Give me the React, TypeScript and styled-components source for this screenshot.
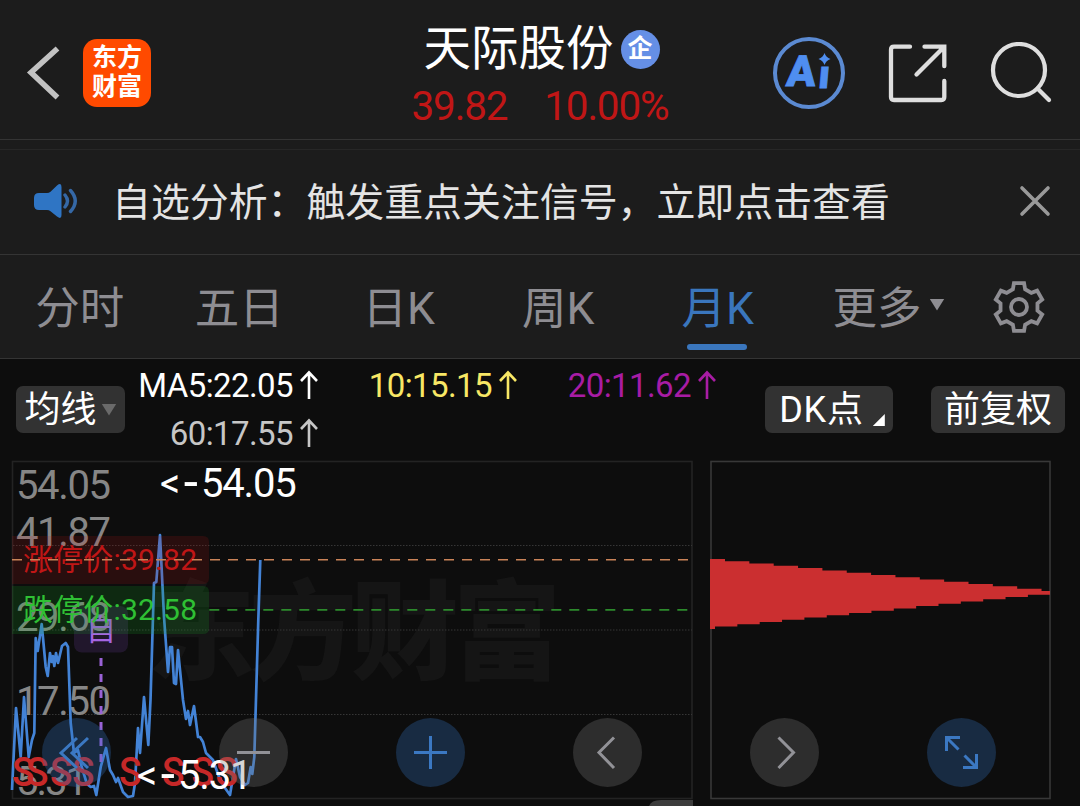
import React from 'react';
import styled, { createGlobalStyle, css } from 'styled-components';

const colors = {
    bar: '#1c1c1c',
    page: '#0d0d0d',
    line: '#343434',
    blue: '#3a76bd',
    muted: '#8e8d92',
    rise: '#c01616',
    fall: '#2fc034',
    price: '#4383d6',
};

const fontStack = "Roboto, 'Noto Sans', 'Noto Sans CJK SC', sans-serif";

const tabs = ['分时', '五日', '日K', '周K', '月K'];

const averages = [
    { label: 'MA5:22.05', color: '#ffffff' },
    { label: '10:15.15', color: '#f8e765' },
    { label: '20:11.62', color: '#a81ca4' },
    { label: '60:17.55', color: '#c6c6c6' },
];

const axisLabels = [
    { text: '54.05', y: 39, width: 95 },
    { text: '41.87', y: 86, width: 95 },
    { text: '29.68', y: 171, width: 95 },
    { text: '17.50', y: 255, width: 95 },
    { text: '5.31', y: 335, width: 72 },
];

const sellMarks = [23, 37, 61, 83, 130, 173, 202.5, 226.5];

const pricePoints = [
    [12, 330], [16, 248], [20.7, 297], [24, 237], [28.7, 297], [32, 280], [34.3, 273],
    [35.7, 178], [37.7, 191], [41.7, 164], [45.7, 207], [47.7, 216], [50, 193], [51.7, 202],
    [53, 196], [54.3, 206], [56, 193], [58, 203], [62, 186], [65.7, 183], [68, 187],
    [70.7, 263], [74, 293], [78, 290], [81.7, 307], [87, 324], [90.7, 327], [94, 326],
    [96.3, 335], [100.7, 307], [106, 288], [110, 310], [113, 315], [116, 322], [118, 318],
    [123, 332], [128, 337], [133, 336], [135, 323], [138, 268], [140, 293], [144, 237],
    [148.3, 285], [150.5, 240], [154, 123], [156.3, 122], [160, 75], [164, 157], [168, 212],
    [170, 187], [172, 187], [174, 223], [176, 224], [178, 190], [183, 240], [186, 259],
    [188, 251], [190, 265], [194, 246], [198, 277], [200, 277], [203, 282], [206, 293],
    [213, 300], [219, 317], [225, 328], [230, 335], [236, 299], [240, 317], [245, 325],
    [248, 323], [250.7, 307], [252.3, 314], [254.3, 297], [258.3, 160], [260.3, 100],
];

// Stepped outline of the chip distribution, upper edge then lower edge back
function buildChips() {
    const points: string[] = [];
    let y = 99;
    points.push(`0,${y}`);
    for (let i = 0; i < 14; i++) {
        const x = 15 + i * 24.35;
        points.push(`${x},${y}`);
        y += 2.28;
        points.push(`${x},${y}`);
    }
    points.push(`340,${y}`);
    y = 134.7;
    points.push(`340,${y}`);
    for (let i = 14; i >= 0; i--) {
        const x = 5 + i * 22.35;
        points.push(`${x},${y}`);
        y += 2.28;
        points.push(`${x},${y}`);
    }
    points.push(`0,${y}`);
    return points.join(' ');
}

function buildGear() {
    const at = (radius: number, deg: number) => {
        const rad = (deg * Math.PI) / 180;
        return `${27 + radius * Math.cos(rad)},${27 + radius * Math.sin(rad)}`;
    };
    const points: string[] = [];
    for (let a = -90; a < 270; a += 60) {
        points.push(at(24.4, a - 12), at(24.4, a + 12), at(18.8, a + 19), at(18.8, a + 41));
    }
    return points.join(' ');
}

function Peak({ x, y, value }: { x: number; y: number; value: string }) {
    return (
        <PeakText x={x} y={y}>
            {'<'}
            <Dash x={x + 22.5}>-</Dash>
            <tspan x={x + 41}>{value}</tspan>
        </PeakText>
    );
}

function PriceChart() {
    return (
        <svg width="694" height="346" viewBox="0 0 694 346">
            <Watermark x="147" y="211" textLength="414">东方财富</Watermark>
            <rect x="12.5" y="1.5" width="679.5" height="337" fill="none" stroke="#232323" strokeWidth="1.6" />
            {[85.5, 170, 254.5].map((y) => (
                <line key={y} x1="13" x2="692" y1={y} y2={y} stroke="#363636" strokeDasharray="1.5 1.5" />
            ))}
            {axisLabels.map((item) => (
                <AxisText key={item.text} x="16" y={item.y} textLength={item.width}>{item.text}</AxisText>
            ))}
            <polyline
                points={pricePoints.map((p) => p.join(',')).join(' ')}
                fill="none"
                stroke={colors.price}
                strokeWidth="2.7"
                strokeLinejoin="round"
            />
            <rect x="74" y="146" width="54" height="46.5" rx="8" fill="rgba(140, 80, 210, 0.16)" />
            <EventText x="86" y="180">自</EventText>
            <line x1="101" x2="101" y1="198" y2="302" stroke="#9a62d6" strokeWidth="3" strokeDasharray="8 8" />
            <path d="M12 76h191q6 0 6 6v36q0 6-6 6H12z" fill="rgba(200, 20, 20, 0.15)" />
            <path d="M12 126h191q6 0 6 6v36q0 6-6 6H12z" fill="rgba(20, 170, 40, 0.18)" />
            <LimitText x="23" y="110" fill={colors.rise} textLength="174">涨停价:39.82</LimitText>
            <LimitText x="23" y="160" fill={colors.fall} textLength="174">跌停价:32.58</LimitText>
            <line x1="12" x2="692" y1="99.8" y2="99.8" stroke="#c98358" strokeWidth="1.6" strokeDasharray="10 8" />
            <line x1="209.3" x2="692" y1="149.8" y2="149.8" stroke="#2c8a2c" strokeWidth="1.8" strokeDasharray="10 8" />
            {sellMarks.map((x) => (
                <SellText key={x} x={x - 11} y="326" textLength="22.5" lengthAdjust="spacingAndGlyphs">S</SellText>
            ))}
            <Peak x={160} y={37} value="54.05" />
            <Peak x={137} y={329} value="5.31" />
            <path d="M649 346q2-6 12-6h32v6z" fill="#3c3c3c" />
        </svg>
    );
}

function ChipChart() {
    return (
        <svg width="341" height="346" viewBox="0 0 341 346">
            <rect x="1" y="1.5" width="339" height="337" fill="none" stroke="#383838" strokeWidth="1.6" />
            <polygon points={buildChips()} fill="#cb2f30" />
        </svg>
    );
}

function App() {
    return (
        <Screen>
            <GlobalStyle />
            <Header>
                <HeaderLeft>
                    <svg width="40" height="60" viewBox="0 0 40 60">
                        <path d="M33.5 5.5L7 29.5l26.5 25" fill="none" stroke="#c2c2c2" strokeWidth="5.5" />
                    </svg>
                    <Logo>
                        <span>东方</span>
                        <span>财富</span>
                    </Logo>
                </HeaderLeft>
                <HeaderTitle>
                    <StockName>
                        天际股份
                        <Badge>企</Badge>
                    </StockName>
                    <Quote>
                        <span>39.82</span>
                        <span>10.00%</span>
                    </Quote>
                </HeaderTitle>
                <HeaderRight>
                    <svg width="74" height="74" viewBox="0 0 74 74">
                        <circle cx="37" cy="37" r="34" fill="none" stroke="#5b8ad2" strokeWidth="4" />
                        <AiText x="14" y="50" fontSize="43" transform="translate(4 0) skewX(-5)">A</AiText>
                        <AiText x="46" y="52" fontSize="40" transform="translate(4 0) skewX(-5)">ı</AiText>
                        <path d="M52.5 17q1.5 4.500 6 6-4.500 1.500-6 6-1.500-4.500-6-6 4.500-1.500 6-6z" fill="#4f8ef0" />
                    </svg>
                    <svg width="60" height="60" viewBox="0 0 60 60" fill="none" stroke="#dedede" strokeWidth="4.3" strokeLinecap="round">
                        <path d="M22 3.700H6q-3 0-3 3V54q0 3 3 3h47.300q3 0 3-3V38" />
                        <path d="M36.500 3.700h19.800v19.500M55.500 4.500L28.500 31.500" />
                    </svg>
                    <svg width="62" height="62" viewBox="0 0 62 62" fill="none" stroke="#dedede" strokeWidth="4.2" strokeLinecap="round">
                        <circle cx="29" cy="28" r="26" />
                        <path d="M47.500 46.500l11.500 11.500" />
                    </svg>
                </HeaderRight>
            </Header>
            <Notice>
                <svg width="46" height="38" viewBox="0 0 46 38">
                    <path
                        d="M6 11h8q2 0 3.500-1.300L24 3.500q4.500-3.500 4.500 1.500v28q0 5-4.500 1.500l-6.500-5.200Q16 28 14 28H6q-5 0-5-5v-7q0-5 5-5z"
                        fill="#2f75c4"
                    />
                    <path d="M32 13q5 6 0 12M37.500 8.500q9.500 10.500 0 21" fill="none" stroke="#3568a6" strokeWidth="3.400" strokeLinecap="round" />
                </svg>
                <NoticeText>自选分析：触发重点关注信号，立即点击查看</NoticeText>
                <svg width="32" height="32" viewBox="0 0 32 32">
                    <path d="M3 3l26 26M29 3L3 29" stroke="#999" strokeWidth="3.600" strokeLinecap="round" />
                </svg>
            </Notice>
            <Tabs>
                {tabs.map((tab) => (
                    <Tab key={tab} $active={tab === '月K'}>{tab}</Tab>
                ))}
                <MoreTab>
                    更多
                    <Caret $size={15} $color={colors.muted} />
                </MoreTab>
                <svg width="54" height="54" viewBox="0 0 54 54" fill="none" stroke={colors.muted} strokeWidth="3.800">
                    <polygon points={buildGear()} />
                    <circle cx="27" cy="27" r="8" />
                </svg>
            </Tabs>
            <Legend>
                <Chip $width={109}>
                    均线
                    <Caret $size={15} $color="#6a6a6a" />
                </Chip>
                <Averages>
                    {averages.map((item) => (
                        <Average key={item.label} $color={item.color}>
                            {item.label}
                            <svg width="20" height="30" viewBox="0 0 20 30" fill="none" stroke="currentColor" strokeWidth="2.600">
                                <path d="M10 29V3M2 11l8-8.500 8 8.500" />
                            </svg>
                        </Average>
                    ))}
                </Averages>
                <Chip $width={128}>
                    <Wide>DK点</Wide>
                    <Corner />
                </Chip>
                <Chip $width={134}>前复权</Chip>
            </Legend>
            <Charts>
                <PriceChart />
                <ChipChart />
                <Controls>
                    <Control $primary>
                        <path d="M35 20L19 35l16 15M46 20L30 35l16 15" />
                    </Control>
                    <Control>
                        <path d="M18 34.500h33" />
                    </Control>
                    <Control $primary>
                        <path d="M18 34.500h33M34.500 18v33" />
                    </Control>
                    <Control>
                        <path d="M41 19.500L26 34.500l15 15.500" />
                    </Control>
                    <Control>
                        <path d="M28.500 19.500l15 15-15 15.500" />
                    </Control>
                    <Control $primary>
                        <path d="M33 19.500H19.500V33M19.500 19.500L31.500 31.500M49.500 36v13.500H36M49.500 49.500L37.500 37.500" />
                    </Control>
                </Controls>
            </Charts>
        </Screen>
    );
}

function Control({ $primary, children }: { $primary?: boolean; children: React.ReactNode }) {
    return (
        <ControlButton $primary={$primary}>
            <svg width="69" height="69" viewBox="0 0 69 69" fill="none" stroke="currentColor" strokeWidth="3">
                {children}
            </svg>
        </ControlButton>
    );
}

const GlobalStyle = createGlobalStyle`
    body {
        margin: 0;
        background: ${colors.page};
        font-family: ${fontStack};
    }

    * {
        box-sizing: border-box;
    }

    svg {
        display: block;
        flex: none;
    }
`;

const Screen = styled.div`
    width: 1080px;
    height: 806px;
    overflow: hidden;
    background: ${colors.page};
    color: #ffffff;
    white-space: nowrap;
`;

const Header = styled.header`
    display: grid;
    grid-template-columns: 1fr auto 1fr;
    height: 140px;
    padding: 0 28px 0 28px;
    background: ${colors.bar};
    border-bottom: 1px solid ${colors.line};
`;

const HeaderLeft = styled.div`
    display: flex;
    align-items: center;
    gap: 19px;
    margin-left: -4px;
    padding-top: 6px;
`;

const Logo = styled.div`
    display: flex;
    flex-direction: column;
    align-items: center;
    justify-content: center;
    width: 68px;
    height: 68px;
    border-radius: 14px;
    background: #ff4a00;
    font-family: 'Noto Sans CJK SC', sans-serif;
    font-size: 25px;
    font-weight: 700;
    line-height: 29px;
    padding-bottom: 5px;
`;

const HeaderTitle = styled.div`
    display: flex;
    flex-direction: column;
    align-items: center;
    padding-top: 19px;
`;

const StockName = styled.div`
    display: flex;
    align-items: center;
    gap: 7px;
    height: 60px;
    padding-left: 3px;
    font-size: 47.5px;
    line-height: 60px;
`;

const Badge = styled.span`
    width: 39px;
    height: 39px;
    border-radius: 50%;
    background: #658fe6;
    font-size: 25px;
    font-weight: 700;
    line-height: 38px;
    text-align: center;
`;

const Quote = styled.div`
    display: flex;
    gap: 37px;
    height: 56px;
    color: ${colors.rise};
    font-size: 40.5px;
    letter-spacing: -1.2px;
    line-height: 54px;
`;

const HeaderRight = styled.div`
    display: flex;
    align-items: center;
    justify-content: flex-end;
    gap: 42px;
    padding-top: 6px;
`;

const AiText = styled.text`
    fill: #4f8ef0;
    stroke: #4f8ef0;
    stroke-width: 0.8px;
    font-family: Roboto, sans-serif;
    font-weight: 900;
`;

const Notice = styled.div`
    display: flex;
    align-items: center;
    height: 106px;
    margin-top: 9px;
    padding: 0 29px 2px 33px;
    background: ${colors.bar};
    border-top: 1px solid #272727;
    border-bottom: 1px solid ${colors.line};
    box-shadow: 0 -9px 0 ${colors.bar};
`;

const NoticeText = styled.div`
    flex: 1;
    margin-left: 33px;
    padding-bottom: 5px;
    color: #e4e4e4;
    font-size: 38.9px;
`;

const Tabs = styled.nav`
    display: flex;
    align-items: center;
    height: 104px;
    background: ${colors.bar};
    border-bottom: 1px solid ${colors.line};
    color: ${colors.muted};
`;

const tabText = css`
    display: flex;
    align-items: center;
    justify-content: center;
    height: 103px;
    padding-bottom: 4px;
    font-size: 44.5px;
`;

const Tab = styled.div<{ $active: boolean }>`
    ${tabText}
    position: relative;
    width: 159.5px;
    color: ${(props) => (props.$active ? colors.blue : colors.muted)};

    &::after {
        content: '';
        display: ${(props) => (props.$active ? 'block' : 'none')};
        position: absolute;
        bottom: 8px;
        left: 49px;
        width: 60px;
        height: 6px;
        border-radius: 3px;
        background: ${colors.blue};
    }
`;

const MoreTab = styled.div`
    ${tabText}
    gap: 8px;
    width: 182px;
    margin-right: 12px;
`;

const Caret = styled.i<{ $size: number; $color: string }>`
    width: ${(props) => props.$size}px;
    height: 12px;
    background: ${(props) => props.$color};
    clip-path: polygon(0 0, 100% 0, 50% 100%);
`;

const Legend = styled.section`
    display: flex;
    height: 101px;
    padding: 2px 15px 0 16px;
`;

const Chip = styled.div<{ $width: number }>`
    display: flex;
    align-items: center;
    justify-content: center;
    gap: 5px;
    width: ${(props) => props.$width}px;
    height: 47px;
    margin-top: 25px;
    border-radius: 7px;
    background: #323232;
    font-size: 36px;
    line-height: 46px;

    & + & {
        margin-left: 38px;
    }
`;

const Wide = styled.span`
    letter-spacing: 0.8px;
`;

const Corner = styled.i`
    align-self: flex-end;
    width: 12px;
    height: 12px;
    margin: 0 -6px 7px 4px;
    background: #ffffff;
    clip-path: polygon(100% 0, 100% 100%, 0 100%);
`;

const Averages = styled.div`
    display: grid;
    grid-template-columns: 194px 199px 199px;
    grid-auto-rows: 48px;
    margin-right: 48px;
`;

const Average = styled.div<{ $color: string }>`
    display: flex;
    align-items: center;
    justify-content: flex-end;
    gap: 6px;
    color: ${(props) => props.$color};
    font-size: 33px;
    letter-spacing: -0.6px;
`;

const Charts = styled.section`
    position: relative;
    display: flex;
    gap: 16px;
    height: 346px;
`;

const Watermark = styled.text`
    fill: #151515;
    font-family: 'Noto Sans CJK SC', sans-serif;
    font-size: 108px;
    font-weight: 900;
`;

const AxisText = styled.text`
    fill: #868686;
    font-size: 40px;
`;

const EventText = styled.text`
    fill: #a565e2;
    font-size: 30px;
`;

const LimitText = styled.text`
    font-size: 30px;
`;

const SellText = styled.text`
    fill: #c62828;
    font-size: 41px;
    font-weight: 500;
`;

const PeakText = styled.text`
    fill: #ffffff;
    font-size: 40px;
    letter-spacing: -1.2px;
`;

const Dash = styled.tspan`
    font-family: 'Liberation Sans', sans-serif;
    font-size: 50px;
`;

const Controls = styled.div`
    position: absolute;
    left: 42px;
    bottom: 19px;
    display: flex;
    gap: 108px;
`;

const ControlButton = styled.button<{ $primary?: boolean }>`
    width: 69px;
    height: 69px;
    padding: 0;
    border: none;
    border-radius: 50%;
    background: ${(props) => (props.$primary ? 'rgba(51, 114, 190, 0.3)' : 'rgba(120, 120, 120, 0.3)')};
    color: ${(props) => (props.$primary ? '#3b78c2' : '#929297')};
`;

export default App;
